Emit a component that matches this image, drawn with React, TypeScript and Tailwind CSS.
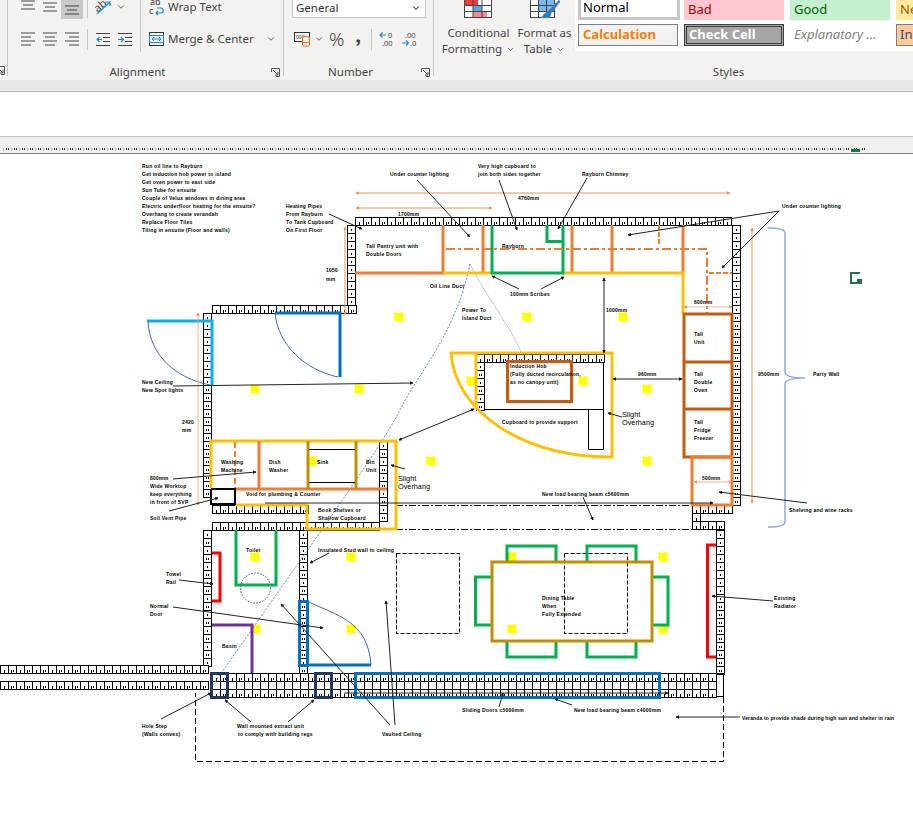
import type { ReactNode } from 'react';
import { ChevronDown } from 'lucide-react';

const ORANGE = '#ed7d31';
const RUST = '#c55a11';
const GOLD = '#ffc000';
const TABLE = '#bf9000';
const GREEN = '#00b050';
const BLUE = '#0070c0';
const NAVY = '#1f3864';
const THIN = '#4472c4';

function LinesIcon({ rows }: { rows: [number, number, number][] }) {
  return (
    <svg width="16" height="16" viewBox="0 0 16 16" stroke="#444" strokeWidth="1">
      {rows.map(([a, b, y], i) => (
        <line key={i} x1={a} x2={b} y1={y} y2={y} />
      ))}
    </svg>
  );
}

function IndentIcon({ flip }: { flip?: boolean }) {
  return (
    <svg width="16" height="16" viewBox="0 0 16 16" fill="none">
      <g stroke="#444">
        <line x1="1" x2="15" y1="2.5" y2="2.5" />
        <line x1="8" x2="15" y1="6.5" y2="6.5" />
        <line x1="8" x2="15" y1="10.5" y2="10.5" />
        <line x1="1" x2="15" y1="14.5" y2="14.5" />
      </g>
      {flip ? (
        <path d="M1 8.5h5M4 6l2.500 2.500L4 11" stroke="#1e8bcd" strokeWidth="1.2" />
      ) : (
        <path d="M7 8.5H2M4.500 6 2 8.500 4.500 11" stroke="#1e8bcd" strokeWidth="1.2" />
      )}
    </svg>
  );
}

function Launcher() {
  return (
    <svg width="9" height="9" viewBox="0 0 9 9" fill="none" stroke="#555">
      <path d="M.5 4V.5H8.500V8.500H5" />
      <path d="M2 2 7 7M7 4v3H4" />
    </svg>
  );
}

function Btn({ children, active }: { children: ReactNode; active?: boolean }) {
  return (
    <div className={`flex h-6 w-[22px] items-center justify-center ${active ? 'bg-[#c8c8c8]' : ''}`}>{children}</div>
  );
}

const Sep = () => <div className="mx-1 h-[21px] w-px bg-[#c8c6c4]" />;

function GroupLabel({ label }: { label: string }) {
  return (
    <div className="flex h-4 items-center text-[#444]">
      <span className="flex-1 text-center">{label}</span>
      <div className="flex w-4 justify-center">
        <Launcher />
      </div>
    </div>
  );
}

function AlignmentGroup() {
  return (
    <div className="h-[76px] w-[276px] shrink-0 border-r border-[#c8c6c4]">
      <div className="flex h-16">
        <div className="-mt-[5px] flex w-[132px] flex-col gap-2 pl-[9px]">
          <div className="flex items-center">
            <Btn><LinesIcon rows={[[1, 15, 2], [3, 13, 6], [1, 15, 10]]} /></Btn>
            <Btn><LinesIcon rows={[[1, 15, 4], [3, 13, 8], [1, 15, 12]]} /></Btn>
            <Btn active><LinesIcon rows={[[1, 15, 7], [3, 13, 11], [1, 15, 15]]} /></Btn>
            <Sep />
            <Btn>
              <svg width="17" height="18" viewBox="0 0 17 18" fill="none">
                <text x="0" y="12" fontSize="11" fill="#444" transform="rotate(-40 5 10)" fontFamily="'Noto Sans',sans-serif">ab</text>
                <path d="M2 16 15 4M10.500 4H15V8" stroke="#1e8bcd" strokeWidth="1.2" />
              </svg>
            </Btn>
            <ChevronDown size={10} color="#444" strokeWidth={2} className="ml-0.5" />
          </div>
          <div className="flex items-center">
            <Btn><LinesIcon rows={[[1, 15, 2], [1, 11, 6], [1, 15, 10], [1, 11, 14]]} /></Btn>
            <Btn><LinesIcon rows={[[1, 15, 2], [3, 13, 6], [1, 15, 10], [3, 13, 14]]} /></Btn>
            <Btn><LinesIcon rows={[[1, 15, 2], [5, 15, 6], [1, 15, 10], [5, 15, 14]]} /></Btn>
            <Sep />
            <Btn><IndentIcon /></Btn>
            <Btn><IndentIcon flip /></Btn>
          </div>
        </div>
        <div className="h-[52px] w-px bg-[#c8c6c4]" />
        <div className="-mt-[5px] flex flex-col gap-2 pl-2">
          <div className="flex h-6 items-center gap-[3px]">
            <svg width="16" height="18" viewBox="0 0 16 18" fill="none">
              <text x="1" y="7" fontSize="9" fill="#444" fontFamily="'Noto Sans',sans-serif">ab</text>
              <text x="0" y="16" fontSize="9" fill="#444" fontFamily="'Noto Sans',sans-serif">c</text>
              <path d="M7 15h5c3 0 3-5 0-5H8M9 13l-2 2 2 2" stroke="#1e8bcd" strokeWidth="1.1" />
            </svg>
            <span className="text-[#444]">Wrap Text</span>
          </div>
          <div className="flex h-6 items-center gap-[3px]">
            <svg width="16" height="16" viewBox="0 0 16 16" fill="none">
              <rect x=".5" y="1.5" width="14" height="13" stroke="#333" />
              <rect x=".5" y="4.5" width="14" height="7" stroke="#1e8bcd" />
              <path d="M3 8h9M5 6 3 8l2 2M10 6l2 2-2 2" stroke="#1e8bcd" />
            </svg>
            <span className="text-[#444]">Merge &amp; Center</span>
            <ChevronDown size={10} color="#444" strokeWidth={2} className="ml-[9px]" />
          </div>
        </div>
      </div>
      <GroupLabel label="Alignment" />
    </div>
  );
}

function NumberGroup() {
  return (
    <div className="h-[76px] w-[150px] shrink-0 border-r border-[#c8c6c4]">
      <div className="flex h-16 flex-col pl-2">
        <div className="-mt-[3px] flex h-[21px] w-[134px] items-center justify-between border border-[#c6c6c6] bg-white pr-1 pl-[3px] text-[#333]">
          General
          <ChevronDown size={10} color="#333" strokeWidth={2.5} />
        </div>
        <div className="mt-[9px] flex h-6 items-center">
          <svg width="18" height="16" viewBox="0 0 18 16" fill="none" className="ml-0.5">
            <rect x=".5" y="1.5" width="15" height="9" stroke="#333" />
            <text x="2" y="8" fontSize="5" fill="#333" fontFamily="'Noto Sans',sans-serif">000</text>
            <ellipse cx="12" cy="7" rx="3.5" ry="1.5" fill="#f3f2f1" stroke="#e36c09" />
            <path d="M8.500 7v7c0 1.500 7 1.500 7 0V7M8.500 10.500c0 1.500 7 1.500 7 0" stroke="#e36c09" fill="#f3f2f1" />
          </svg>
          <ChevronDown size={10} color="#444" strokeWidth={2} className="ml-[2px]" />
          <span className="ml-[5px] text-[19px] leading-none font-light text-[#444]">%</span>
          <span className="ml-[11px] -mt-2 font-serif text-[24px] leading-none font-bold text-[#444]">,</span>
          <div className="ml-[10px] mr-[7px] h-[21px] w-px bg-[#c8c6c4]" />
          <svg width="17" height="16" viewBox="0 0 17 16" fill="none">
            <path d="M7 4H1M3.500 1.500 1 4l2.500 2.500" stroke="#1e8bcd" strokeWidth="1.2" />
            <text x="9" y="7" fontSize="7.500" fill="#444" fontFamily="'Noto Sans',sans-serif">0</text>
            <text x="3" y="15" fontSize="7.500" fill="#444" fontFamily="'Noto Sans',sans-serif">.00</text>
          </svg>
          <svg width="17" height="16" viewBox="0 0 17 16" fill="none" className="ml-[5px]">
            <path d="M1 12h6M5 9.500 7.500 12 5 14.500" stroke="#1e8bcd" strokeWidth="1.2" />
            <text x="4" y="7" fontSize="7.500" fill="#444" fontFamily="'Noto Sans',sans-serif">.00</text>
            <text x="9" y="15" fontSize="7.500" fill="#444" fontFamily="'Noto Sans',sans-serif">.0</text>
          </svg>
        </div>
      </div>
      <GroupLabel label="Number" />
    </div>
  );
}

function StylesGroup() {
  return (
    <div className="h-[76px] min-w-0 flex-1">
      <div className="flex h-16">
        <div className="flex w-[80px] shrink-0 flex-col items-center pl-[9px] text-[#444]">
          <svg width="29" height="18" viewBox="0 0 29 18" fill="none">
            <rect x=".5" y="-6" width="27" height="23.500" fill="#fff" stroke="#444" />
            <rect x="1" y="0" width="13" height="5" fill="#ee3b3b" />
            <rect x="9" y="6" width="9" height="5" fill="#5ba6e6" />
            <rect x="9" y="12" width="14" height="5" fill="#f7858a" />
            <path d="M9 -6V17M18 -6V17M1 5.500H28M1 11.500H28" stroke="#444" />
          </svg>
          <div className="mt-[7px] flex flex-col items-center leading-4">
            <span>Conditional</span>
            <span className="flex items-center gap-1">Formatting<ChevronDown size={9} color="#444" strokeWidth={2} /></span>
          </div>
        </div>
        <div className="flex w-[61px] shrink-0 flex-col items-center text-[#444]">
          <svg width="30" height="18" viewBox="0 0 30 18" fill="none">
            <rect x=".5" y="-6" width="24" height="23.500" fill="#fff" stroke="#444" />
            <rect x="9" y="0" width="15" height="11" fill="#7db7ea" />
            <path d="M8.500 -6V17M16.500 -6V17M1 5.500H25M1 11.500H25" stroke="#444" />
            <path d="M29 0 17 12c-3 1-4 4-6 6h7c3-1 3-4 3-5L30 2Z" fill="#1f7fd0" stroke="#8a8a8a" strokeWidth=".6" />
          </svg>
          <div className="mt-[7px] flex flex-col items-center leading-4">
            <span>Format as</span>
            <span className="flex items-center gap-1">Table<ChevronDown size={9} color="#444" strokeWidth={2} /></span>
          </div>
        </div>
        <div className="h-[51px] flex-1 overflow-hidden bg-white pl-[3px] text-[13px]">
          <div className="-mt-1 flex gap-[4px]">
            <div className="flex h-[24px] w-[102px] shrink-0 items-center border-[3px] border-[#c6c6c6] bg-white pl-[2px] text-black">Normal</div>
            <div className="flex h-[21px] w-[100px] shrink-0 items-center self-end bg-[#ffc7ce] pl-1 text-[#9c0006]">Bad</div>
            <div className="ml-[2px] flex h-[21px] w-[100px] shrink-0 items-center self-end bg-[#c6efce] pl-1 text-[#006100]">Good</div>
            <div className="ml-[2px] flex h-[21px] w-[40px] shrink-0 items-center self-end bg-[#ffeb9c] pl-1 text-[#9c5700]">Neutral</div>
          </div>
          <div className="mt-1 flex gap-[6px]">
            <div className="flex h-[22px] w-[100px] shrink-0 items-center border border-[#7f7f7f] bg-[#f2f2f2] pl-1 font-bold text-[#fa7d00]">Calculation</div>
            <div className="flex h-[22px] w-[100px] shrink-0 items-center border-[3px] border-double border-[#3f3f3f] bg-[#a5a5a5] pl-[2px] font-bold text-white">Check Cell</div>
            <div className="flex h-[22px] w-[100px] shrink-0 items-center pl-1 text-[#7f7f7f] italic">Explanatory ...</div>
            <div className="flex h-[22px] w-[40px] shrink-0 items-center border border-[#7f7f7f] bg-[#ffcc99] pl-[3px] text-[#3f3f76]">Input</div>
          </div>
        </div>
      </div>
      <div className="flex h-4 items-center pl-[110px] text-[#444]">
        <span className="flex-1 text-center">Styles</span>
      </div>
    </div>
  );
}

function Ribbon() {
  return (
    <div className="flex h-20 overflow-hidden bg-[#f3f2f1] text-[11.5px] font-['Noto_Sans',sans-serif]">
      <div className="flex h-[76px] w-[8px] shrink-0 items-end border-r border-[#c8c6c4] pb-[1px]">
        <div className="-ml-1 flex">
          <Launcher />
        </div>
      </div>
      <AlignmentGroup />
      <NumberGroup />
      <StylesGroup />
    </div>
  );
}

function Ruler() {
  return (
    <svg width="913" height="6" viewBox="0 0 913 6" className="block">
      {Array.from({ length: 108 }, (_, i) => 3 + i * 8).map((x) => (
        <g key={x} fill="#333">
          <rect x={x} y="2" width="1" height="3" fill="#bbb" />
          <rect x={x + 3} y="2" width="1" height="2" />
          <rect x={x + 5} y="2" width="1" height="2" />
        </g>
      ))}
      <rect x="851" y="3" width="9" height="3" fill="#217346" />
    </svg>
  );
}

// one run of wall bricks, 8px cells
function Bricks({ x, y, n, v, dots, plain }: { x: number; y: number; n: number; v?: boolean; dots?: number; plain?: boolean }) {
  return (
    <g>
      {Array.from({ length: n }, (_, i) => {
        const cx = v ? x : x + i * 8;
        const cy = v ? y + i * 8 : y;
        const two = dots !== undefined ? i >= dots : i % 2 === 1;
        return (
          <g key={i}>
            <rect x={cx + 0.5} y={cy + 0.5} width="8" height="8" fill="#fff" stroke="#000" />
            {!plain && v && (
              <>
                <rect x={two ? cx + 3 : cx + 4} y={cy + 4} width="1" height="2" fill="#000" />
                {two && <rect x={cx + 5} y={cy + 4} width="1" height="2" fill="#000" />}
              </>
            )}
            {!plain && !v && (
              <>
                <rect x={two ? cx + 3 : cx + 4} y={cy + 5} width="1" height="3" fill="#000" />
                {two && <rect x={cx + 5} y={cy + 5} width="1" height="2" fill="#000" />}
              </>
            )}
          </g>
        );
      })}
    </g>
  );
}

const spots = [
  [399, 317], [527, 317], [623, 317], [255, 389], [359, 389], [312, 461], [431, 461], [471, 381], [583, 381],
  [647, 389], [647, 461], [255, 557], [351, 557], [256, 629], [351, 629], [512, 557], [663, 557], [512, 629], [663, 629],
];

// [x1, y1, x2, y2, double headed]
const arrows: [number, number, number, number, boolean?][] = [
  [417, 180, 470, 237], [499, 180, 517, 230], [587, 178, 558, 229], [779, 211, 628, 235], [779, 211, 722, 268],
  [329, 214, 362, 229], [519, 289, 492, 276], [541, 289, 564, 277], [604, 278, 604, 353, true], [173, 386, 413, 383],
  [173, 479, 256, 472], [169, 511, 218, 498], [474, 409, 399, 440, true], [405, 469, 391, 465], [622, 417, 608, 413],
  [613, 379, 682, 379, true], [807, 503, 719, 492], [265, 503, 713, 503], [583, 497, 593, 520], [329, 553, 310, 563],
  [179, 580, 213, 584], [173, 607, 323, 628], [390, 725, 281, 604], [395, 725, 386, 601], [161, 719, 211, 693],
  [251, 722, 225, 700], [288, 722, 314, 700], [572, 705, 555, 699], [344, 693, 668, 693], [499, 707, 503, 693],
  [740, 717, 676, 717], [773, 601, 712, 596],
];

const dims: [number, number, number, number, string][] = [
  [356, 193, 730, 193, '#e8935a'], [356, 208, 492, 208, '#e8935a'], [345, 227, 345, 315, '#e8935a'],
  [198, 313, 198, 505, '#eeb38c'], [752, 228, 752, 503, '#e8935a'], [684, 307, 732, 307, '#f4b99a'], [694, 482, 732, 482, '#f0b48c'],
];

// [x, y centre, text]
const labels: [number, number, string][] = [
  [142, 166, 'Run oil line to Rayburn'], [142, 174, 'Get induction hob power to island'], [142, 182, 'Get oven power to east side'],
  [142, 190, 'Sun Tube for ensuite'], [142, 198, 'Couple of Velux windows in dining area'],
  [142, 206, 'Electric underfloor heating for the ensuite?'], [142, 214, 'Overhang to create verandah'],
  [142, 222, 'Replace Floor Tiles'], [142, 230, 'Tiling in ensuite (Floor and walls)'],
  [390, 174, 'Under counter lighting'], [478, 166, 'Very high cupboard to'], [478, 174, 'join both sides together'],
  [582, 174, 'Rayburn Chimney'], [518, 198, '4760mm'], [398, 214, '1700mm'],
  [286, 206, 'Heating Pipes'], [286, 214, 'From Rayburn'], [286, 222, 'To Tank Cupboard'], [286, 230, 'On First Floor'],
  [366, 246, 'Tall Pantry unit with'], [366, 254, 'Double Doors'], [326, 270, '1050'], [326, 279, 'mm'], [502, 246, 'Rayburn'],
  [430, 286, 'Oil Line Duct'], [510, 294, '100mm Scribes'], [462, 310, 'Power To'], [462, 318, 'Island Duct'], [606, 310, '1000mm'],
  [694, 302, '600mm'], [694, 334, 'Tall'], [694, 342, 'Unit'], [782, 206, 'Under counter lighting'],
  [510, 366, 'Induction Hob'], [510, 374, '(Fully ducted recirculation,'], [510, 382, 'as no canopy unit)'],
  [502, 422, 'Cupboard to provide support'], [638, 374, '960mm'], [694, 374, 'Tall'], [694, 382, 'Double'], [694, 390, 'Oven'],
  [694, 422, 'Tall'], [694, 430, 'Fridge'], [694, 438, 'Freezer'], [702, 478, '500mm'], [758, 374, '9500mm'], [813, 374, 'Party Wall'],
  [542, 494, 'New load bearing beam c5600mm'], [789, 510, 'Shelving and wine racks'], [142, 382, 'New Ceiling'], [142, 390, 'New Spot lights'],
  [182, 422, '2420'], [182, 430, 'mm'], [221, 462, 'Washing'], [221, 470, 'Machine'], [269, 462, 'Dish'], [269, 470, 'Washer'],
  [317, 462, 'Sink'], [366, 462, 'Bin'], [366, 470, 'Unit'], [150, 478, '800mm'], [150, 486, 'Wide Worktop'], [150, 494, 'keep everything'],
  [150, 502, 'in front of SVP'], [150, 518, 'Soil Vent Pipe'], [246, 494, 'Void for plumbing & Counter'],
  [318, 510, 'Book Shelves or'], [318, 518, 'Shallow Cupboard'], [246, 550, 'Toilet'], [166, 574, 'Towel'], [166, 582, 'Rail'],
  [150, 606, 'Normal'], [150, 614, 'Door'], [222, 646, 'Basin'], [318, 550, 'Insulated Stud wall to ceiling'],
  [142, 726, 'Hole Step'], [142, 734, '(Walls convex)'], [237, 726, 'Wall mounted extract unit'], [238, 734, 'to comply with building regs'],
  [382, 734, 'Vaulted Ceiling'], [542, 598, 'Dining Table'], [542, 606, 'When'], [542, 614, 'Fully Extended'],
  [774, 598, 'Existing'], [774, 606, 'Radiator'], [462, 710, 'Sliding Doors c5000mm'], [574, 710, 'New load bearing beam c4000mm'],
];

function FloorPlan() {
  return (
    <svg width="913" height="666" viewBox="0 154 913 666" fill="none" className="block">
      <defs>
        <marker id="head" viewBox="0 0 6 6" refX="5" refY="3" markerWidth="3.500" markerHeight="3.500" orient="auto-start-reverse" markerUnits="userSpaceOnUse">
          <path d="M0 0 6 3 0 6Z" fill="#111" />
        </marker>
        <marker id="dim" viewBox="0 0 6 6" refX="5" refY="3" markerWidth="3.500" markerHeight="3.500" orient="auto-start-reverse" markerUnits="userSpaceOnUse">
          <path d="M0 0 6 3 0 6Z" fill="#e8935a" />
        </marker>
      </defs>

      {spots.map(([x, y]) => (
        <rect key={`${x}-${y}`} x={x - 4.5} y={y - 4.5} width="9" height="9" fill="#ffff00" />
      ))}

      {/* walls */}
      <Bricks x={355} y={217} n={47} />
      <Bricks x={732} y={225} n={35} v dots={11} />
      <Bricks x={347} y={225} n={10} v dots={99} />
      <Bricks x={212} y={305} n={18} />
      <Bricks x={203} y={313} n={23} v dots={9} />
      <Bricks x={212} y={505} n={12} />
      <Bricks x={212} y={522} n={12} />
      <Bricks x={203} y={530} n={17} v />
      <Bricks x={299} y={530} n={18} v />
      <Bricks x={0} y={665} n={26} />
      <Bricks x={0} y={681} n={26} />
      <Bricks x={212} y={673} n={63} />
      <Bricks x={212} y={681} n={63} plain />
      <Bricks x={212} y={689} n={63} />
      <Bricks x={716} y={530} n={18} v dots={9} />
      <Bricks x={692} y={505} n={5} />
      <Bricks x={692} y={513} n={1} />
      <Bricks x={692} y={521} n={4} />
      <Bricks x={476} y={354} n={16} />
      <Bricks x={476} y={362} n={6} v />
      <Bricks x={379} y={441} n={10} v />
      <Bricks x={307} y={522} n={9} />
      <rect x="716.500" y="673.500" width="7" height="23" stroke="#000" />

      {/* dashed outlines */}
      <g stroke="#000" strokeDasharray="7 2 2 2">
        <path d="M396 505.500H692M396 529.500H692" />
      </g>
      <g stroke="#000" strokeDasharray="6 3">
        <path d="M723.500 697V761.500H195.500V693" />
      </g>
      <g stroke="#000" strokeDasharray="4 2">
        <rect x="396.500" y="553.500" width="63" height="80" />
        <rect x="564.500" y="553.500" width="63" height="80" />
      </g>
      <circle cx="255.500" cy="588" r="15" stroke="#444" strokeDasharray="1.500 1.500" />

      {/* thin duct runs */}
      <path d="M470 264C455 335 420 370 400 410S300 560 213 685" stroke={THIN} strokeDasharray="2 1.500" opacity=".85" />
      <path d="M470 264C485 295 510 325 524 358" stroke="#7f8fa9" strokeDasharray="1.500 1" opacity=".8" />

      {/* kitchen run */}
      <g strokeWidth="3">
        <path d="M355 273H443V225M483 225V273M572 225V273M612 225V273M683 225V273" stroke={ORANGE} />
        <path d="M443 273H492M563 273H683V313" stroke={GOLD} />
        <path d="M492 225V273H563V225M547 225V241.500H563" stroke={GREEN} />
        <path d="M446 249H707V315" stroke={ORANGE} strokeWidth="2" strokeDasharray="9 3 3 3" />
        <path d="M659 225V246M709 273H732" stroke={ORANGE} strokeWidth="2" strokeDasharray="5 2" />
        <rect x="684" y="314" width="48" height="143" stroke={RUST} />
        <path d="M684 362H732M684 409H732" stroke={RUST} />
        <rect x="692" y="457" width="40" height="48" stroke={ORANGE} />
      </g>

      {/* island */}
      <g strokeWidth="3">
        <path d="M476 409V353M451 353H612V457C520 457 455 410 451 353Z" stroke={GOLD} />
        <rect x="507.500" y="361.500" width="64" height="40" stroke={RUST} />
      </g>
      <path d="M484 409.500H603.500V362M588.500 409V449.500H603.500V409" stroke="#000" />

      {/* utility run */}
      <g strokeWidth="3">
        <path d="M211 488V441H396V529H307V505H235" stroke={GOLD} />
        <path d="M235 489H387M259 441V489" stroke={ORANGE} />
        <path d="M308 441V489M356 441V489" stroke={TABLE} />
        <path d="M235 442V489" stroke={ORANGE} strokeWidth="2" strokeDasharray="6 3" />
        <path d="M211 489V504H235V489H211" stroke="#000" strokeWidth="2" />
      </g>
      <path d="M309 449.500H355M309 482.500H355" stroke="#000" />

      {/* doors */}
      <g strokeWidth="3">
        <path d="M147 321H212V385" stroke="#00b0f0" />
        <path d="M275 313H340V377" stroke={BLUE} />
        <path d="M299.500 601.500H307.500V665.500H299.500ZM307 665H371" stroke={BLUE} />
        <rect x="211.500" y="673.500" width="16" height="24" stroke={NAVY} />
        <rect x="315.500" y="673.500" width="16" height="24" stroke={NAVY} />
        <rect x="355.500" y="673.500" width="304" height="24" stroke={BLUE} />
      </g>
      <g stroke="#3f6aab">
        <path d="M148 322C150 355 175 378 210 385" />
        <path d="M275 313C278 345 305 370 338 377" />
        <path d="M309 602C335 615 368 620 371 665" />
      </g>

      {/* ensuite */}
      <g strokeWidth="3">
        <path d="M236 530V585H276V530" stroke={GREEN} />
        <path d="M212 553H220V601H212" stroke="#ff0000" />
        <path d="M212 625H252V673" stroke="#7030a0" />
        <path d="M716 545H707.500V657H716" stroke="#ff0000" />
      </g>

      {/* dining table */}
      <g strokeWidth="3" stroke={GREEN}>
        <path d="M507 562V546H556V562M587 562V546H636V562M507 641V657H556V641M587 641V657H636V641" />
        <path d="M492 577H475.500V625H492M652 577H668V625H652" />
        <rect x="492" y="562" width="160" height="79" stroke={TABLE} />
      </g>

      {/* party wall brace */}
      <path d="M768 228C778 228 785 229 785 233V372C785 376 792 378 805 378C792 378 785 380 785 384V522C785 526 778 527 768 527" stroke="#8faadc" strokeWidth="1.500" />

      {dims.map(([x1, y1, x2, y2, c], i) => (
        <line key={i} x1={x1} y1={y1} x2={x2} y2={y2} stroke={c} markerStart="url(#dim)" markerEnd="url(#dim)" />
      ))}
      {arrows.map(([x1, y1, x2, y2, both], i) => (
        <line key={i} x1={x1} y1={y1} x2={x2} y2={y2} stroke="#222" markerStart={both ? 'url(#head)' : undefined} markerEnd="url(#head)" />
      ))}

      <g fill="#000" fontFamily="'Liberation Sans',sans-serif" fontSize="5" fontWeight="700" letterSpacing=".25" dominantBaseline="central">
        {labels.map(([x, y, t]) => (
          <text key={`${x}-${y}`} x={x} y={y}>{t}</text>
        ))}
        <text x="742" y="718" letterSpacing=".13">Veranda to provide shade during high sun and shelter in rain</text>
      </g>
      <g fill="#000" fontFamily="'Liberation Sans',sans-serif" fontSize="7.300" dominantBaseline="central">
        <text x="398" y="478">Slight</text>
        <text x="398" y="486">Overhang</text>
        <text x="622" y="414">Slight</text>
        <text x="622" y="422">Overhang</text>
      </g>

      {/* selected shape handle */}
      <path d="M860 273H851V283H857" stroke="#217346" strokeWidth="2" />
      <rect x="857" y="279" width="5" height="5" fill="#217346" />
    </svg>
  );
}

export default function App() {
  return (
    <div className="flex h-[820px] w-[913px] flex-col overflow-hidden bg-white">
      <Ribbon />
      <div className="h-[12px] border-b border-[#bdbdbd] bg-[#e6e6e6]" />
      <div className="h-[44px] bg-white" />
      <div className="h-[18px] border-y border-[#c4c4c4] border-b-[#808080] bg-[#f0f0f0] pt-[9px]">
        <Ruler />
      </div>
      <FloorPlan />
    </div>
  );
}
